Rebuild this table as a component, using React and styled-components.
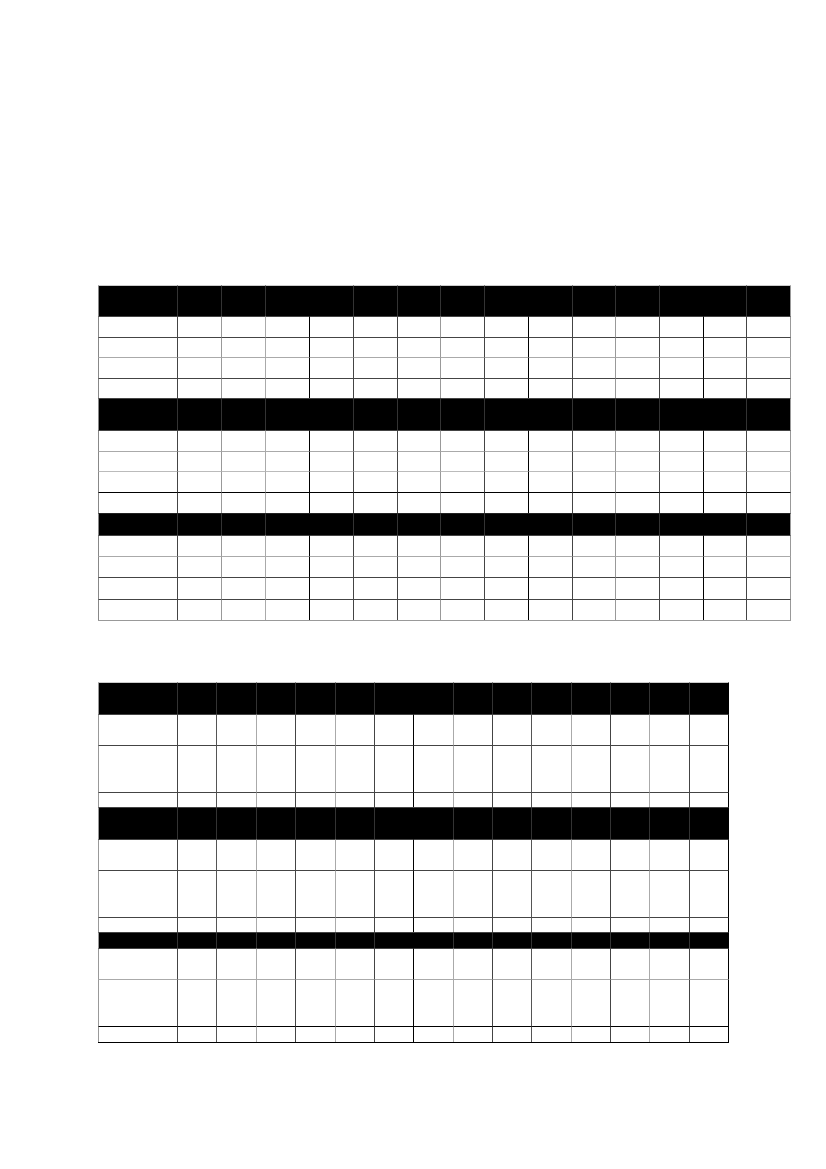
import React from "react";
import styled, { createGlobalStyle } from "styled-components";

const GlobalStyle = createGlobalStyle`
  html, body {
    margin: 0;
    padding: 0;
    background: #ffffff;
    font-family: "Liberation Sans", Arial, sans-serif;
  }
`;

const Page = styled.main`
  width: 826px;
  min-height: 1169px;
  box-sizing: border-box;
  padding: 285px 0 0 98px;
  display: flex;
  flex-direction: column;
  gap: 61px;
  background: #ffffff;
`;

const Sheet = styled.div`
  display: flex;
  flex-direction: column;
  width: ${(p) => p.$width}px;
  border-bottom: 1px solid ${(p) => p.$bottom};
`;

const Row = styled.div`
  display: grid;
  grid-template-columns: ${(p) => p.$cols};
  height: ${(p) => p.$h}px;
`;

const Cell = styled.div`
  box-sizing: border-box;
  grid-column: span ${(p) => p.$span || 1};
  background: ${(p) => (p.$head ? "#000000" : "#ffffff")};
  border-top: 1px solid ${(p) => p.$top};
  border-left: 1px solid ${(p) => p.$left};
  border-right: ${(p) => (p.$right ? `1px solid ${p.$right}` : "none")};
`;

const tables = [
  {
    cols: [79, 44, 44, 44, 44, 44, 43, 44, 44, 44, 43, 44, 44, 43, 45],
    vcolors: ["#888", "#444", "#999", "#aaa", "#000", "#444", "#444", "#999", "#444", "#000", "#444", "#999", "#444", "#000", "#444"],
    right: "#999",
    bottom: "#999",
    spans: [1, 1, 1, 2, 1, 1, 1, 2, 1, 1, 2, 1],
    rows: [
      { head: true, h: 31, top: "#ccc" },
      { h: 21, top: "#444" },
      { h: 20, top: "#444" },
      { h: 21, top: "#aaa" },
      { h: 20, top: "#444" },
      { head: true, h: 32, top: "#444" },
      { h: 21, top: "#444" },
      { h: 20, top: "#aaa" },
      { h: 21, top: "#bbb" },
      { h: 21, top: "#000" },
      { head: true, h: 22, top: "#222" },
      { h: 21, top: "#444" },
      { h: 21, top: "#aaa" },
      { h: 22, top: "#444" },
      { h: 21, top: "#444" },
    ],
  },
  {
    cols: [79, 39, 40, 39, 40, 39, 39, 40, 39, 39, 40, 39, 39, 40, 40],
    vcolors: ["#999", "#444", "#555", "#aaa", "#444", "#aaa", "#444", "#000", "#aaa", "#444", "#555", "#aaa", "#444", "#aaa", "#444"],
    right: "#000",
    bottom: "#000",
    spans: [1, 1, 1, 1, 1, 1, 2, 1, 1, 1, 1, 1, 1, 1],
    rows: [
      { head: true, h: 32, top: "#ccc" },
      { h: 31, top: "#444" },
      { h: 47, top: "#444" },
      { h: 15, top: "#444" },
      { head: true, h: 32, top: "#444" },
      { h: 31, top: "#444" },
      { h: 47, top: "#444" },
      { h: 15, top: "#444" },
      { head: true, h: 16, top: "#444" },
      { h: 31, top: "#444" },
      { h: 47, top: "#aaa" },
      { h: 16, top: "#000" },
    ],
  },
];

function HeadRow({ table, row, template }) {
  let col = 0;
  return (
    <Row $cols={template} $h={row.h}>
      {table.spans.map((span, i) => {
        const first = col === 0;
        const last = i === table.spans.length - 1;
        col += span;
        return (
          <Cell
            key={i}
            $head
            $span={span}
            $top={row.top}
            $left={first ? table.vcolors[0] : "#333"}
            $right={last ? table.right : null}
          />
        );
      })}
    </Row>
  );
}

function BodyRow({ table, row, template }) {
  return (
    <Row $cols={template} $h={row.h}>
      {table.cols.map((_, i) => (
        <Cell
          key={i}
          $top={row.top}
          $left={table.vcolors[i]}
          $right={i === table.cols.length - 1 ? table.right : null}
        />
      ))}
    </Row>
  );
}

function Grid({ table }) {
  const template = table.cols.map((w) => `${w}px`).join(" ");
  const width = table.cols.reduce((a, b) => a + b, 0);
  return (
    <Sheet $width={width} $bottom={table.bottom}>
      {table.rows.map((row, i) =>
        row.head ? (
          <HeadRow key={i} table={table} row={row} template={template} />
        ) : (
          <BodyRow key={i} table={table} row={row} template={template} />
        )
      )}
    </Sheet>
  );
}

export default function App() {
  return (
    <>
      <GlobalStyle />
      <Page>
        {tables.map((t, i) => (
          <Grid key={i} table={t} />
        ))}
      </Page>
    </>
  );
}
